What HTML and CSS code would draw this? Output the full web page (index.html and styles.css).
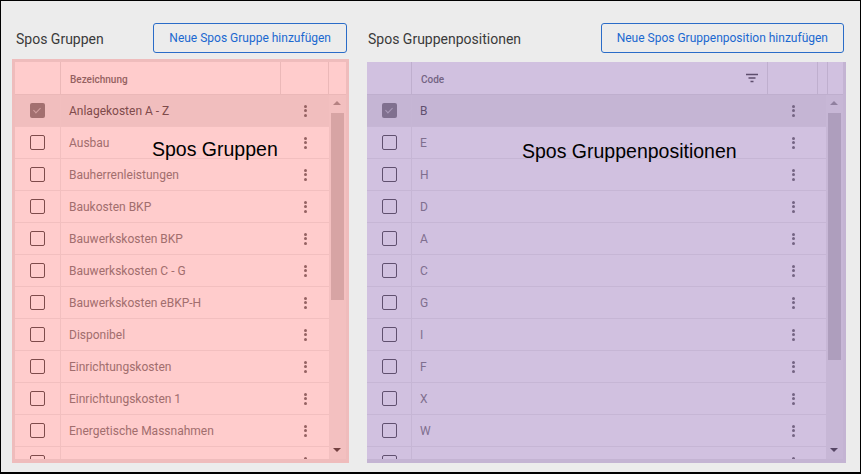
FILE: index.html
```html
<!DOCTYPE html>
<html lang="de">
<head>
    <meta charset="UTF-8">
    <meta name="viewport" content="width=device-width, initial-scale=1.0">
    <title>Spos Gruppen</title>
    <link rel="stylesheet" href="styles.css">
</head>
<body>
    <div class="frame">
        <section class="panel panel-left">
            <div class="panel-head">
                <h2>Spos Gruppen</h2>
                <button class="add-btn">Neue Spos Gruppe hinzufügen</button>
            </div>
            <div class="table">
                <div class="thead">
                    <div class="th"></div>
                    <div class="th">Bezeichnung</div>
                    <div class="th"></div>
                    <div class="th"></div>
                </div>
                <div class="tbody">
                    <div class="rows">
                        <div class="row selected"><div class="cell"><span class="check on"></span></div><div class="cell text">Anlagekosten A - Z</div><div class="cell"><span class="kebab"><i></i><i></i><i></i></span></div></div>
                        <div class="row"><div class="cell"><span class="check"></span></div><div class="cell text">Ausbau</div><div class="cell"><span class="kebab"><i></i><i></i><i></i></span></div></div>
                        <div class="row"><div class="cell"><span class="check"></span></div><div class="cell text">Bauherrenleistungen</div><div class="cell"><span class="kebab"><i></i><i></i><i></i></span></div></div>
                        <div class="row"><div class="cell"><span class="check"></span></div><div class="cell text">Baukosten BKP</div><div class="cell"><span class="kebab"><i></i><i></i><i></i></span></div></div>
                        <div class="row"><div class="cell"><span class="check"></span></div><div class="cell text">Bauwerkskosten BKP</div><div class="cell"><span class="kebab"><i></i><i></i><i></i></span></div></div>
                        <div class="row"><div class="cell"><span class="check"></span></div><div class="cell text">Bauwerkskosten C - G</div><div class="cell"><span class="kebab"><i></i><i></i><i></i></span></div></div>
                        <div class="row"><div class="cell"><span class="check"></span></div><div class="cell text">Bauwerkskosten eBKP-H</div><div class="cell"><span class="kebab"><i></i><i></i><i></i></span></div></div>
                        <div class="row"><div class="cell"><span class="check"></span></div><div class="cell text">Disponibel</div><div class="cell"><span class="kebab"><i></i><i></i><i></i></span></div></div>
                        <div class="row"><div class="cell"><span class="check"></span></div><div class="cell text">Einrichtungskosten</div><div class="cell"><span class="kebab"><i></i><i></i><i></i></span></div></div>
                        <div class="row"><div class="cell"><span class="check"></span></div><div class="cell text">Einrichtungskosten 1</div><div class="cell"><span class="kebab"><i></i><i></i><i></i></span></div></div>
                        <div class="row"><div class="cell"><span class="check"></span></div><div class="cell text">Energetische Massnahmen</div><div class="cell"><span class="kebab"><i></i><i></i><i></i></span></div></div>
                        <div class="row"><div class="cell"><span class="check"></span></div><div class="cell text"></div><div class="cell"><span class="kebab"><i></i><i></i><i></i></span></div></div>
                    </div>
                    <div class="scrollbar">
                        <span class="arrow up"></span>
                        <span class="thumb"></span>
                        <span class="arrow down"></span>
                    </div>
                </div>
                <div class="tint">
                    <span class="tint-label">Spos Gruppen</span>
                </div>
            </div>
        </section>

        <section class="panel panel-right">
            <div class="panel-head">
                <h2>Spos Gruppenpositionen</h2>
                <button class="add-btn">Neue Spos Gruppenposition hinzufügen</button>
            </div>
            <div class="table">
                <div class="thead">
                    <div class="th"></div>
                    <div class="th th-code">Code
                        <svg class="filter" width="14" height="10" viewBox="0 0 14 10"><path d="M1 1.5h12M3.5 5h7M5.5 8.5h3" stroke="#5b5b5b" stroke-width="1.3"/></svg>
                    </div>
                    <div class="th"></div>
                    <div class="th"></div>
                    <div class="th"></div>
                </div>
                <div class="tbody">
                    <div class="rows">
                        <div class="row selected"><div class="cell"><span class="check on"></span></div><div class="cell text">B</div><div class="cell"><span class="kebab"><i></i><i></i><i></i></span></div><div class="cell"></div></div>
                        <div class="row"><div class="cell"><span class="check"></span></div><div class="cell text">E</div><div class="cell"><span class="kebab"><i></i><i></i><i></i></span></div><div class="cell"></div></div>
                        <div class="row"><div class="cell"><span class="check"></span></div><div class="cell text">H</div><div class="cell"><span class="kebab"><i></i><i></i><i></i></span></div><div class="cell"></div></div>
                        <div class="row"><div class="cell"><span class="check"></span></div><div class="cell text">D</div><div class="cell"><span class="kebab"><i></i><i></i><i></i></span></div><div class="cell"></div></div>
                        <div class="row"><div class="cell"><span class="check"></span></div><div class="cell text">A</div><div class="cell"><span class="kebab"><i></i><i></i><i></i></span></div><div class="cell"></div></div>
                        <div class="row"><div class="cell"><span class="check"></span></div><div class="cell text">C</div><div class="cell"><span class="kebab"><i></i><i></i><i></i></span></div><div class="cell"></div></div>
                        <div class="row"><div class="cell"><span class="check"></span></div><div class="cell text">G</div><div class="cell"><span class="kebab"><i></i><i></i><i></i></span></div><div class="cell"></div></div>
                        <div class="row"><div class="cell"><span class="check"></span></div><div class="cell text">I</div><div class="cell"><span class="kebab"><i></i><i></i><i></i></span></div><div class="cell"></div></div>
                        <div class="row"><div class="cell"><span class="check"></span></div><div class="cell text">F</div><div class="cell"><span class="kebab"><i></i><i></i><i></i></span></div><div class="cell"></div></div>
                        <div class="row"><div class="cell"><span class="check"></span></div><div class="cell text">X</div><div class="cell"><span class="kebab"><i></i><i></i><i></i></span></div><div class="cell"></div></div>
                        <div class="row"><div class="cell"><span class="check"></span></div><div class="cell text">W</div><div class="cell"><span class="kebab"><i></i><i></i><i></i></span></div><div class="cell"></div></div>
                        <div class="row"><div class="cell"><span class="check"></span></div><div class="cell text"></div><div class="cell"><span class="kebab"><i></i><i></i><i></i></span></div><div class="cell"></div></div>
                    </div>
                    <div class="scrollbar">
                        <span class="arrow up"></span>
                        <span class="thumb"></span>
                        <span class="arrow down"></span>
                    </div>
                </div>
                <div class="tint">
                    <span class="tint-label">Spos Gruppenpositionen</span>
                </div>
            </div>
        </section>
    </div>
</body>
</html>
```

FILE: styles.css
```css
body {
    margin: 0;
    font-family: Roboto, "Noto Sans", sans-serif;
    background-color: #ececec;
}
.frame {
    box-sizing: border-box;
    width: 861px;
    height: 474px;
    border: 1px solid #000;
    border-bottom-width: 2px;
    background-color: #ececec;
    display: flex;
    gap: 21px;
    padding: 22px 0 0 14px;
}
.panel {
    display: flex;
    flex-direction: column;
}
.panel-left {
    width: 331px;
}
.panel-right {
    width: 476px;
}
.panel-head {
    display: flex;
    justify-content: space-between;
    align-items: center;
    height: 30px;
    margin-bottom: 9px;
}
.panel-head h2 {
    margin: 2px 0 0 1px;
    font-size: 14px;
    font-weight: 400;
    color: #3a3a3a;
}
.add-btn {
    height: 30px;
    padding: 0 15px;
    margin-right: -1px;
    font-family: inherit;
    font-size: 12px;
    color: #1b68d0;
    background: transparent;
    border: 1px solid #2a6cc8;
    border-radius: 3px;
}
.table {
    position: relative;
    height: 397px;
    background-color: #fff;
    display: flex;
    flex-direction: column;
}
.thead {
    display: grid;
    grid-template-columns: 46px 220px 48px 17px;
    height: 33px;
    border-bottom: 1px solid #e6e6e6;
    box-sizing: border-box;
}
.panel-right .thead {
    grid-template-columns: 45px 356px 50px 8px 17px;
}
.th {
    display: flex;
    align-items: center;
    padding: 3px 0 0 9px;
    font-size: 10px;
    font-weight: 500;
    color: #7a7a7a;
    border-right: 1px solid #e6e6e6;
}
.th:last-child {
    border-right: none;
}
.th-code {
    justify-content: space-between;
    padding-right: 8px;
}
.filter {
    display: block;
    margin-top: -4px;
}
.tbody {
    flex: 1;
    display: flex;
    overflow: hidden;
}
.rows {
    flex: 1;
    overflow: hidden;
}
.row {
    display: grid;
    grid-template-columns: 46px 220px 48px;
    height: 32px;
    box-sizing: border-box;
    border-bottom: 1px solid #efefef;
}
.panel-right .row {
    grid-template-columns: 45px 356px 50px 8px;
}
.row.selected {
    background-color: #eeeeee;
}
.cell {
    display: flex;
    align-items: center;
    justify-content: center;
}
.cell:first-child {
    border-right: 1px solid #efefef;
}
.cell.text {
    justify-content: flex-start;
    padding-left: 8px;
    font-size: 12px;
    color: #8a8a8a;
}
.row.selected .cell.text {
    color: #5e5e5e;
}
.check {
    box-sizing: border-box;
    width: 15px;
    height: 15px;
    border: 1.5px solid #5e5e5e;
    border-radius: 2px;
}
.check.on {
    position: relative;
    border: none;
    background-color: #8c8c8c;
}
.check.on::after {
    content: "";
    position: absolute;
    left: 5px;
    top: 3px;
    width: 3px;
    height: 6px;
    border: solid #c8c8c8;
    border-width: 0 1px 1px 0;
    transform: rotate(45deg);
}
.kebab {
    display: flex;
    flex-direction: column;
    gap: 1.5px;
}
.kebab i {
    width: 3px;
    height: 3px;
    border-radius: 50%;
    background-color: #7a7a7a;
}
.scrollbar {
    position: relative;
    width: 17px;
    background-color: #f1f1f1;
}
.thumb {
    position: absolute;
    left: 2px;
    right: 2px;
    top: 18px;
    height: 187px;
    background-color: #cdcdcd;
}
.panel-right .thumb {
    height: 247px;
}
.arrow {
    position: absolute;
    left: 4px;
    width: 0;
    height: 0;
    border-left: 4.5px solid transparent;
    border-right: 4.5px solid transparent;
}
.arrow.up {
    top: 6px;
    border-bottom: 4px solid #a3a3a3;
}
.arrow.down {
    bottom: 7px;
    border-top: 4px solid #505050;
}
.tint {
    position: absolute;
    inset: -3px;
    bottom: -4px;
    background-color: rgba(255, 0, 0, 0.2);
    pointer-events: none;
}
.panel-right .tint {
    inset: 0 -3px -4px 0;
    background-color: rgba(102, 51, 153, 0.3);
}
.tint-label {
    position: absolute;
    left: 140px;
    top: 79px;
    font-family: "Liberation Sans", Arial, sans-serif;
    font-size: 19.5px;
    color: #000;
}
.panel-right .tint-label {
    left: 155px;
    top: 78px;
}
```
